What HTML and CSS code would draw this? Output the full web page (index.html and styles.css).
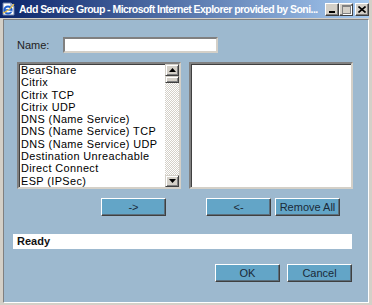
FILE: index.html
```html
<!DOCTYPE html>
<html>
<head>
<meta charset="utf-8">
<link rel="stylesheet" href="styles.css">
</head>
<body>
<div class="window">
  <div class="titlebar">
    <svg class="app-icon" width="14" height="14" viewBox="0 0 14 14">
      <path d="M1 1h8l3 3v9H1z" fill="#fff" stroke="#6a7fa8" stroke-width="1"/>
      <path d="M9 1v3h3" fill="#dfe6f2" stroke="#6a7fa8" stroke-width="1"/>
      <circle cx="6" cy="8" r="3.6" fill="none" stroke="#1d5fd0" stroke-width="2"/>
      <path d="M2.6 8h7" stroke="#1d5fd0" stroke-width="1.6"/>
      <path d="M6 8h4" stroke="#fff" stroke-width="0.8" transform="translate(0 1.3)"/>
      <path d="M1 11c3-1 8-5 11-9" fill="none" stroke="#f2c33c" stroke-width="1.2"/>
    </svg>
    <span class="title-text">Add Service Group - Microsoft Internet Explorer provided by Soni...</span>
    <div class="caption-buttons">
      <span class="cap-btn cap-min"><i></i></span>
      <span class="cap-btn cap-max"><i></i></span>
      <span class="cap-btn cap-close">
        <svg width="8" height="7" viewBox="0 0 8 7"><path d="M0.5 0.5l7 6M7.5 0.5l-7 6" stroke="#000" stroke-width="1.6"/></svg>
      </span>
    </div>
  </div>
  <div class="client">
    <div class="name-row">
      <label class="name-label">Name:</label>
      <div class="text-input"></div>
    </div>
    <div class="lists">
      <div class="listbox">
        <ul class="items">
          <li>BearShare</li>
          <li>Citrix</li>
          <li>Citrix TCP</li>
          <li>Citrix UDP</li>
          <li>DNS (Name Service)</li>
          <li>DNS (Name Service) TCP</li>
          <li>DNS (Name Service) UDP</li>
          <li>Destination Unreachable</li>
          <li>Direct Connect</li>
          <li>ESP (IPSec)</li>
        </ul>
        <div class="scrollbar">
          <span class="sb-btn"><svg width="7" height="4" viewBox="0 0 7 4"><path d="M3.5 0L7 4H0z" fill="#000"/></svg></span>
          <span class="sb-thumb"></span>
          <span class="sb-track"></span>
          <span class="sb-btn"><svg width="7" height="4" viewBox="0 0 7 4"><path d="M0 0h7L3.5 4z" fill="#000"/></svg></span>
        </div>
      </div>
      <div class="listbox"></div>
    </div>
    <div class="move-row">
      <button class="btn">-&gt;</button>
      <button class="btn btn-back">&lt;-</button>
      <button class="btn">Remove All</button>
    </div>
    <div class="status">Ready</div>
    <div class="actions">
      <button class="btn">OK</button>
      <button class="btn">Cancel</button>
    </div>
  </div>
</div>
</body>
</html>
```

FILE: styles.css
```css
html, body {
  margin: 0;
  padding: 0;
}
body {
  width: 372px;
  height: 305px;
  overflow: hidden;
  font-family: "Liberation Sans", Arial, sans-serif;
}
.window {
  width: 372px;
  height: 305px;
  background: #d4d0c8;
  display: flex;
  flex-direction: column;
}
.titlebar {
  height: 18px;
  margin-right: 3px;
  background: linear-gradient(to right, #0a246a, #a6caf0);
  display: flex;
  align-items: center;
  position: relative;
}
.app-icon {
  margin-left: 2px;
  flex: none;
}
.title-text {
  margin-left: 3px;
  max-width: 306px;
  overflow: hidden;
  color: #fff;
  font-weight: bold;
  font-size: 10.5px;
  letter-spacing: -0.55px;
  white-space: nowrap;
}
.caption-buttons {
  position: absolute;
  right: 0;
  top: 3px;
  display: flex;
}
.cap-btn {
  width: 12px;
  height: 11px;
  background: #d4d0c8;
  border: 1px solid;
  border-color: #fff #404040 #404040 #fff;
  box-shadow: inset -1px -1px #808080;
  position: relative;
  display: flex;
  align-items: center;
  justify-content: center;
}
.cap-close {
  margin-left: 2px;
}
.cap-min i {
  position: absolute;
  left: 3px;
  bottom: 2px;
  width: 6px;
  height: 2px;
  background: #000;
}
.cap-max i {
  width: 7px;
  height: 6px;
  border: 1px solid #808080;
  border-top-width: 2px;
  box-shadow: 1px 1px #fff;
}
.client {
  margin: 1px 3px 2px 3px;
  flex: 1;
  background: #9db9cf;
  border: 1px solid;
  border-color: #808080 #fff #fff #808080;
  display: flex;
  flex-direction: column;
}
.name-row {
  display: flex;
  align-items: center;
  margin: 17px 0 0 13px;
  height: 16px;
}
.name-label {
  width: 46px;
  font-size: 11px;
  color: #222;
}
.text-input {
  width: 151px;
  height: 12px;
  background: #fff;
  border: 2px solid;
  border-color: #808080 #d4d0c8 #d4d0c8 #808080;
}
.lists {
  display: flex;
  gap: 8px;
  margin: 9px 0 0 13px;
}
.listbox {
  width: 160px;
  height: 123px;
  background: #fff;
  border: 2px solid;
  border-color: #808080 #d4d0c8 #d4d0c8 #808080;
  box-shadow: inset 1px 1px #404040;
  display: flex;
}
.items {
  list-style: none;
  margin: 0;
  padding: 0 0 0 2px;
  flex: 1;
  font-size: 10.9px;
  letter-spacing: 0.4px;
  line-height: 12.3px;
  color: #000;
  white-space: nowrap;
  overflow: hidden;
}
.scrollbar {
  width: 14px;
  display: flex;
  flex-direction: column;
}
.sb-btn {
  height: 10px;
  background: #d4d0c8;
  border: 1px solid;
  border-color: #d4d0c8 #404040 #404040 #d4d0c8;
  box-shadow: inset 1px 1px #fff, inset -1px -1px #808080;
  display: flex;
  align-items: center;
  justify-content: center;
}
.sb-thumb {
  height: 5px;
  background: #d4d0c8;
  border: 1px solid;
  border-color: #d4d0c8 #404040 #404040 #d4d0c8;
  box-shadow: inset 1px 1px #fff, inset -1px -1px #808080;
}
.sb-track {
  flex: 1;
  background: repeating-conic-gradient(#d4d0c8 0 25%, #fff 0 50%) 0 0 / 2px 2px;
}
.move-row {
  display: flex;
  margin: 9px 0 0 97px;
  gap: 4px;
}
.btn {
  width: 65px;
  height: 18px;
  margin: 0;
  padding: 0;
  background: #63a5c7;
  border: 1px solid;
  border-color: #fff #404040 #404040 #fff;
  box-shadow: inset -1px -1px #5a6e7c;
  font-family: "Liberation Sans", Arial, sans-serif;
  font-size: 11px;
  color: #1a2a38;
}
.btn-back {
  margin-left: 36px;
}
.status {
  margin: 18px 0 0 9px;
  width: 335px;
  height: 15px;
  padding-left: 4px;
  background: #fff;
  font-size: 11px;
  font-weight: bold;
  line-height: 15px;
  color: #111;
}
.actions {
  display: flex;
  justify-content: flex-end;
  gap: 7px;
  margin-top: 15px;
  padding-right: 16px;
}
```
